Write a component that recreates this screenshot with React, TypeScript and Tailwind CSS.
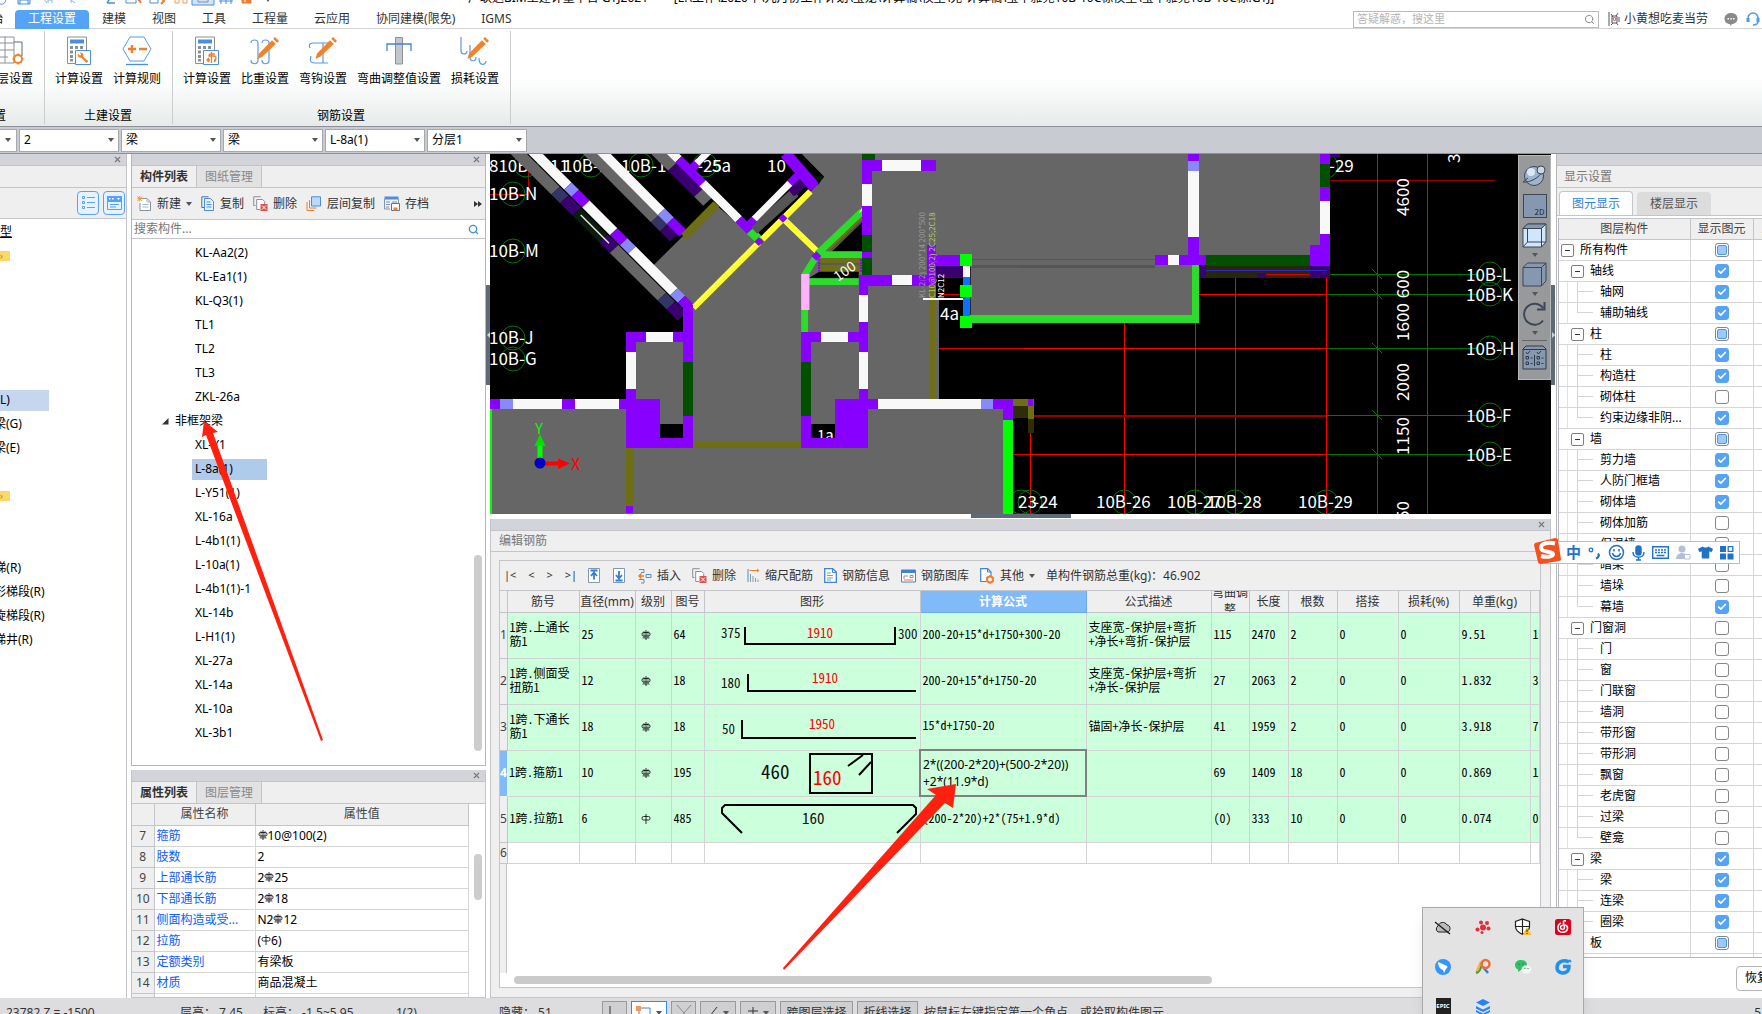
import type { ReactNode } from "react"
import { Check, Search, X } from "lucide-react"
import { FaTshirt } from "react-icons/fa"

type CheckState = "on" | "off" | "mixed"

const PURPLE = "#8800ff"
const DARK_PURPLE = "#3a0070"
const LILAC = "#8888ff"
const WHITE = "#f8f8f8"
const GREY = "#666666"
const FOREST = "#005000"
const GREEN = "#2bdc2b"
const OLIVE = "#6e6e14"
const YELLOW = "#ffff33"
const GRID = "#007800"

/* ---------- shared bits ---------- */

function PanelStrip({ closable = true }: { closable?: boolean }) {
  return (
    <div className="flex h-3 shrink-0 items-center justify-end border-b border-[#c3c5cb] bg-[#d2d4da] pr-1">
      {closable && (
        <button type="button" aria-label="关闭" className="text-[#777]">
          <X size={9} strokeWidth={3} />
        </button>
      )}
    </div>
  )
}

function Caret() {
  return <span className="inline-block border-x-[3px] border-t-4 border-x-transparent border-t-[#555]" />
}

function PanelTabs({ tabs }: { tabs: string[] }) {
  return (
    <div className="flex h-[22px] shrink-0 border-b border-[#c3c5cb] bg-[#efefef]" role="tablist">
      {tabs.map((tab, i) => (
        <button
          key={tab}
          type="button"
          role="tab"
          aria-selected={i === 0}
          className={
            i === 0
              ? "border-r border-[#c3c5cb] px-2 font-bold text-[#333]"
              : "border-r border-[#c3c5cb] bg-[#e2e2e2] px-2 text-[#888]"
          }
        >
          {tab}
        </button>
      ))}
    </div>
  )
}

function ToolButton({ icon, label, caret }: { icon: ReactNode; label: string; caret?: boolean }) {
  return (
    <button type="button" className="flex shrink-0 items-center gap-[5px] whitespace-nowrap text-[#333]">
      {icon}
      {label}
      {caret && <Caret />}
    </button>
  )
}

/* HRB400 / HPB300 bar marks */
function BarMark({ grade = 3 }: { grade?: number }) {
  return (
    <svg width="10" height="10" viewBox="0 0 10 10" className="inline-block align-baseline" fill="none" stroke="#000" strokeWidth="0.800">
      <rect x="1" y="2.500" width="8" height="3.500" rx="1.500" />
      <path d="M5 0v10" />
      {grade === 3 && <path d="M3 1v7M7 1v7M1.500 8h7" strokeWidth="0.600" />}
    </svg>
  )
}

/* ---------- icons ---------- */

function NewIcon() {
  return (
    <svg width="15" height="15" viewBox="0 0 15 15" fill="none">
      <path d="M4 2.500h6l3.500 3.500v8.500H3V7" fill="#fff" stroke="#8a9299" />
      <path d="M10 2.500V6h3.500M5.500 8.500h6M5.500 11h6" stroke="#aab4bc" />
      <path d="M.5.5l4.500 4.500M5 .5L.5 5M2.700 0v5.500M0 2.700h5.500" stroke="#f59a2c" />
    </svg>
  )
}

function CopyIcon() {
  return (
    <svg width="14" height="15" viewBox="0 0 14 15" fill="none" stroke="#4a8fdc">
      <path d="M3 11.500H.8V.8h6.700" stroke="#3f73a8" />
      <path d="M3.500 2.500h6l3 3v9h-9z" fill="#e8f2fd" />
      <path d="M5.500 6h4M5.500 8.500h5M5.500 11h5" />
    </svg>
  )
}

function DeleteIcon() {
  return (
    <svg width="15" height="15" viewBox="0 0 15 15" fill="none" stroke="#8a9299">
      <path d="M2.500 9.500H.7V.7h7" />
      <path d="M7 13.500H3.700V3.500h6l2 2V8" fill="#fff" />
      <path d="M7.500 8h7v7h-7z" fill="#d9534f" stroke="none" />
      <path d="M9 9.500l4 4M13 9.500l-4 4" stroke="#fff" />
    </svg>
  )
}

function LayerCopyIcon() {
  return (
    <svg width="16" height="15" viewBox="0 0 16 15" fill="none">
      <path d="M1 6v8.500h7M3.500 4v8h7" stroke="#ef7f2e" />
      <path d="M5.500.8h9v9.200h-9z" fill="#b9d8fa" stroke="#4a8fdc" />
    </svg>
  )
}

function ArchiveIcon() {
  return (
    <svg width="16" height="15" viewBox="0 0 16 15" fill="none">
      <path d="M.5.5h14v3H.5z" fill="#4a8fdc" />
      <path d="M.5 3v10H6M14.500 3v4M2 6h4M2 8.500h4M2 11h3M8 6h5" stroke="#7f97b0" />
      <path d="M7.500 7.500h8v7h-8z" fill="#fff" stroke="#4a78b0" />
      <path d="M9.500 11.500h4v3h-4z" fill="#ef7f2e" />
    </svg>
  )
}

function MoveIcon({ down }: { down?: boolean }) {
  return (
    <svg width="12" height="15" viewBox="0 0 12 15" fill="none">
      <path d="M.5.5h11v14H.5z" fill="#fff" stroke="#7f97b0" />
      <path
        d={down ? "M6 3v7M3 7l3 3.500L9 7M2.500 12.500h7" : "M6 11.500V5M3 8l3-3.500L9 8M2.500 2.500h7"}
        stroke="#2f7fd6"
        strokeWidth="1.800"
      />
    </svg>
  )
}

function InsertIcon() {
  return (
    <svg width="14" height="16" viewBox="0 0 14 16" fill="none">
      <path d="M1 1.500h5v3H3M3 15h3v-3.500H1" stroke="#7b858e" />
      <path d="M6 8H1.500M3.500 5.500L1 8l2.500 2.500" stroke="#ef7f2e" strokeWidth="1.500" />
      <path d="M8 6.500h5v3H8z" stroke="#4a8fdc" />
    </svg>
  )
}

function ScaleIcon() {
  return (
    <svg width="13" height="15" viewBox="0 0 13 15" fill="none">
      <path d="M3.500 6v8M6 8v6M8.500 10v4M11 11.500V14" stroke="#8a9bb0" />
      <path d="M2.500 2.500h9M10 1l2 1.500L10 4" stroke="#ef7f2e" />
      <path d="M1 14V1" stroke="#4a8fdc" />
    </svg>
  )
}

function InfoIcon() {
  return (
    <svg width="13" height="15" viewBox="0 0 13 15" fill="none" stroke="#3f84d6">
      <path d="M.7.700h8L12.300 4v10.300H.7z" fill="#fff" strokeWidth="1.300" />
      <path d="M8.500 1v3.500H12" />
      <path d="M3 5h4M3 7.500h6M3 10h6M3 12h4" stroke="#7b9cc0" />
    </svg>
  )
}

function LibraryIcon() {
  return (
    <svg width="15" height="14" viewBox="0 0 15 14" fill="none">
      <path d="M.5 1h14v12H.5z" fill="#fff" stroke="#3f84d6" />
      <path d="M.5 1h14v3H.5z" fill="#3f84d6" />
      <path d="M3 10V7h4M9 6.500h3v2H9z" stroke="#8a9299" />
      <path d="M3 11h9" stroke="#ef7f2e" />
    </svg>
  )
}

function OtherIcon() {
  return (
    <svg width="15" height="16" viewBox="0 0 15 16" fill="none">
      <path d="M6 13.500H.7V.7h7L11 4v4" fill="#fff" stroke="#3f84d6" strokeWidth="1.200" />
      <path d="M7.500.7V4H11" stroke="#3f84d6" />
      <circle cx="10" cy="11.500" r="3" stroke="#ef7f2e" strokeWidth="2" />
      <path d="M10 7v9M5.800 9.500l8.400 4M14.200 9.500l-8.400 4" stroke="#ef7f2e" strokeDasharray="1.500 6" />
    </svg>
  )
}

function CalcIcon({ mark }: { mark: "wrench" | "bar" }) {
  return (
    <svg width="28" height="30" viewBox="0 0 28 30" fill="none">
      <path d="M2.500 1h19v26.500h-19z" fill="#fff" stroke="#8a9299" />
      <path d="M5 3.500h14v4H5z" fill="#4a8fdc" />
      <path d="M5 10h3v3H5zM10 10h3v3h-3zM15 10h3v3h-3zM5 14.500h3v3H5zM5 19h3v3H5zM5 23h3v2.500H5z" fill="#8a9299" />
      <path d="M10.500 14.500h15v14h-15z" fill="#fff" stroke="#4a8fdc" />
      {mark === "wrench" ? (
        <path d="M13 17.500a3 3 0 003.500 4.200l5 5.300 1.800-1.800-5-4.500a3.200 3.200 0 00-3.600-4.200l1.500 2-1.200 1.300z" fill="#ef7f2e" />
      ) : (
        <path d="M18.500 16v11M22 18h-4a2 2 0 00-2 2h5a2 2 0 010 4M14 24h3M16 22l-2 2 2 2M21 26l2-2" stroke="#ef7f2e" strokeWidth="1.300" />
      )}
    </svg>
  )
}

function RulesIcon() {
  return (
    <svg width="30" height="30" viewBox="0 0 30 30" fill="none">
      <path d="M8 1h14l7 12-7 12H8L1 13z" fill="#fff" stroke="#5a9be6" />
      <path d="M6 13h8M10 9v8M17 13h8" stroke="#ef7f2e" strokeWidth="2.400" />
      <path d="M4 28.500h22" stroke="#4a8fdc" strokeWidth="1.300" />
    </svg>
  )
}

function PencilIcon({ kind }: { kind: "weight" | "hook" | "loss" }) {
  const paths = {
    weight: "M1 7c0-4 7-4 7 0v17c0 5-7 5-7 0M12 7c0-4 7-4 7 0v17c0 5-7 5-7 0",
    hook: "M2 12C0 8 3 7 6 7h14M3 20c-2 7 1 7 5 7h12M15 7v20M11 27h9",
    loss: "M1 1v14c0 4 6 4 6 0M10 9v12c0 5 6 5 6 0M19 22c0 9 7 7 7 3",
  }
  return (
    <svg width="30" height="30" viewBox="0 0 30 30" fill="none">
      <path d={paths[kind]} stroke="#5a9be6" strokeWidth="1.200" />
      <path d="M25 1l4 4-1.800 1.800-4-4z" fill="#ef7f2e" />
      <path d="M22 4.200l3.800 3.800L12.500 20.500l-5 2.500 1.500-5.500z" fill="#f0822c" />
    </svg>
  )
}

function BendIcon() {
  return (
    <svg width="26" height="30" viewBox="0 0 26 30" fill="none">
      <path d="M9.500 1.500h7V28h-7z" fill="#c3c7cc" stroke="#8a9299" />
      <path d="M1 15V8h24v7" stroke="#3f84d6" strokeWidth="1.300" />
    </svg>
  )
}

function FloorIcon() {
  return (
    <svg width="30" height="30" viewBox="0 0 30 30" fill="none">
      <path d="M2 1h18v26H2M2 7h18M2 14h18M2 21h12M11 1v26" stroke="#8a9299" />
      <path d="M20 6h8v14" stroke="#5a6a7a" />
      <circle cx="24" cy="23" r="4" stroke="#f0822c" strokeWidth="2" />
      <path d="M24 17v12M18 23h12M20 19l8 8M28 19l-8 8" stroke="#f0822c" strokeDasharray="2 8" />
    </svg>
  )
}

/* ---------- top area ---------- */

function TitleBar() {
  return (
    <header className="flex h-[10px] items-end overflow-hidden bg-white">
      <div className="flex h-6 w-[468px] shrink-0 items-center">
        <svg width="280" height="24" viewBox="0 0 280 24" fill="none" stroke="#4a8fdc">
          <path d="M0 18c4 1 6-2 6-6" />
          <path d="M18 4v14h12V4M20 18v-4h8v4" fill="#cfe3fa" />
          <path d="M43 12l4 5M48 17v-3h4v3M75 17l-4-3v3" stroke="#8fb4de" />
          <path d="M107 17h8M107 17l4-6" strokeWidth="1.500" />
          <path d="M126 8h10v9h-10zM126 12h10" />
          <path d="M150 8h8v9h-8zM134 10l7 7" />
          <path d="M137 11l4 6M161 12l3 3-3 3" stroke="#ef7f2e" strokeWidth="2" />
          <path d="M175 10v7h4v-7M183 10v7h4v-7" stroke="#ef9a5a" />
          <path d="M192 4h22v15h-22z" fill="#cfe3fa" />
          <path d="M198 13h10v3h-10z" stroke="#8a9299" />
          <path d="M219 8h14M219 15h14M221 5v13M226 5v13M231 5v13" />
          <path d="M242 8h9v9h-9z" stroke="#ef7f2e" fill="#ef7f2e" />
          <path d="M245 10v6M243 13h6" stroke="#fff" />
          <path d="M266 13l2 3 2-3z" fill="#555" stroke="none" />
        </svg>
      </div>
      <h1 className="h-6 whitespace-pre text-xs leading-6 text-black">
        {"广联达BIM土建计量平台 GTJ2021  -     [E:\\工作\\2020年\\九月份工作计划\\宝龙\\计算稿\\模型\\宛-计算稿\\宝华雅苑10B-10C栋模型\\宝华雅苑10B-10C栋.GTJ]"}
      </h1>
    </header>
  )
}

const MENU = ["工程设置", "建模", "视图", "工具", "工程量", "云应用", "协同建模(限免)", "IGMS"]

function MenuBar() {
  return (
    <nav className="flex h-[19px] items-center border-b border-[#d5d5d5] bg-white">
      <span className="flex w-[15px] justify-end overflow-hidden pr-3">始</span>
      {MENU.map((item, i) => (
        <button
          key={item}
          type="button"
          className={
            i === 0
              ? "h-[19px] shrink-0 rounded-t-sm bg-[#55a3f7] px-[13px] text-white"
              : "h-[19px] shrink-0 px-[13px] text-[#333]"
          }
        >
          {item}
        </button>
      ))}
      <div className="flex-1" />
      <label className="flex h-[17px] w-[246px] items-center border border-[#bbb] px-[3px]">
        <input aria-label="搜索" placeholder="答疑解惑，搜这里" className="w-full min-w-0 text-[11px] outline-none placeholder:text-[#b5b5b5]" />
        <Search size={11} className="shrink-0 text-[#888]" />
      </label>
      <div className="flex w-[163px] shrink-0 items-center gap-1 pl-[9px]">
        <svg width="12" height="14" viewBox="0 0 12 14" fill="none" stroke="#556">
          <path d="M1 0v14M3 2l2 3M10 1L8 4M4 4h5v7H4zM3 13l2-2M10 13l-1.500-2M11 5v5" />
          <circle cx="6.500" cy="7" r="1.500" stroke="#c44" />
        </svg>
        <span className="w-[96px] whitespace-nowrap text-[#333]">小黄想吃麦当劳</span>
        <svg width="14" height="14" viewBox="0 0 14 14">
          <path d="M7 1c4 0 6.500 2.300 6.500 5.500S11 12 8 12l-1.500 2L6 12C2.500 12 .5 9.500.5 6.500S3 1 7 1z" fill="#8a8a8a" />
          <path d="M3.500 6h1.500v1.500H3.500zM6.300 6h1.500v1.500H6.300zM9 6h1.500v1.500H9z" fill="#fff" />
        </svg>
        <svg width="14" height="14" viewBox="0 0 14 14" fill="none" stroke="#4a9af5" className="ml-1 shrink-0">
          <path d="M2 9V6a5 5 0 0110 0v3c0 3-2 4-5 4" strokeWidth="1.500" />
          <path d="M2 6v4M12 6v4" strokeWidth="3" />
        </svg>
      </div>
    </nav>
  )
}

function RibbonGroup({ title, children, clipped }: { title: string; children: ReactNode; clipped?: boolean }) {
  return (
    <section className="flex shrink-0 flex-col">
      <div className="flex">{children}</div>
      <h2 className={clipped ? "mt-auto -ml-[22px] text-left leading-4" : "mt-auto text-center leading-4"}>{title}</h2>
    </section>
  )
}

function RibbonButton({ icon, label }: { icon: ReactNode; label: string }) {
  return (
    <button type="button" className="flex shrink-0 flex-col items-center gap-[3px] whitespace-nowrap px-[5px] pt-[5px] leading-5">
      {icon}
      {label}
    </button>
  )
}

function Ribbon() {
  return (
    <div className="flex h-[97px] overflow-hidden bg-linear-to-b from-white from-50% to-[#e6ebea] py-[2px] text-black">
      <div className="flex w-[45px] shrink-0 justify-end overflow-hidden border-r border-[#ccc] pr-[6px]">
        <RibbonGroup title="基本设置" clipped>
          <RibbonButton icon={<FloorIcon />} label="楼层设置" />
        </RibbonGroup>
      </div>
      <div className="flex border-r border-[#ccc] pr-1.5 pl-[5px]">
        <RibbonGroup title="土建设置">
          <RibbonButton icon={<CalcIcon mark="wrench" />} label="计算设置" />
          <RibbonButton icon={<RulesIcon />} label="计算规则" />
        </RibbonGroup>
      </div>
      <div className="flex border-r border-[#ccc] pr-1.5 pl-[5px]">
        <RibbonGroup title="钢筋设置">
          <RibbonButton icon={<CalcIcon mark="bar" />} label="计算设置" />
          <RibbonButton icon={<PencilIcon kind="weight" />} label="比重设置" />
          <RibbonButton icon={<PencilIcon kind="hook" />} label="弯钩设置" />
          <RibbonButton icon={<BendIcon />} label="弯曲调整值设置" />
          <RibbonButton icon={<PencilIcon kind="loss" />} label="损耗设置" />
        </RibbonGroup>
      </div>
    </div>
  )
}

const SELECTS = [
  { label: "楼层", value: "2" },
  { label: "类别", value: "梁" },
  { label: "构件类型", value: "梁" },
  { label: "构件", value: "L-8a(1)" },
  { label: "分层", value: "分层1" },
]

function SelectorBar() {
  return (
    <div className="flex h-7 items-center gap-[2px] border-y border-[#8e9298] bg-[#c8cbd1]">
      <div className="flex h-[23px] w-[17px] items-center justify-center border border-l-0 border-[#a6a8ac] bg-white">
        <Caret />
      </div>
      {SELECTS.map(({ label, value }) => (
        <div key={label} className="relative h-[23px] w-[100px]">
          <select aria-label={label} className="h-full w-full appearance-none rounded-none border border-[#a6a8ac] bg-white px-1 text-black">
            <option>{value}</option>
          </select>
          <span className="pointer-events-none absolute inset-y-0 right-[5px] flex items-center">
            <Caret />
          </span>
        </div>
      ))}
    </div>
  )
}

/* ---------- left side ---------- */

const MODULES = ["型", "*", "", "", "", "", "", "L)", "梁(G)", "梁(E)", "", "*", "", "", "楼梯(R)", "形梯段(R)", "旋梯段(R)", "梯井(R)"]

function ModulePanel() {
  return (
    <aside className="flex w-[127px] shrink-0 flex-col overflow-hidden border-r border-[#c3c5cb] bg-white">
      <PanelStrip />
      <div className="h-[22px] shrink-0 border-b border-[#c3c5cb] bg-[#efefef]" />
      <div className="flex h-[31px] shrink-0 items-center justify-end gap-1 border-b border-[#c3c5cb] bg-[#efefef] pr-px">
        <button type="button" aria-label="列表" className="grid h-6 w-[22px] place-items-center rounded-sm border border-[#55a3f7] bg-[#e6f2fe]">
          <svg width="13" height="14" viewBox="0 0 13 14" fill="none" stroke="#55a3f7">
            <path d="M.5.5h2v2h-2zM.5 5.500h2v2h-2zM.5 10.500h2v2h-2zM5 1.500h8M5 6.500h8M5 11.500h8" />
          </svg>
        </button>
        <button type="button" aria-label="面板" className="grid h-6 w-[22px] place-items-center rounded-sm border border-[#55a3f7] bg-[#e6f2fe]">
          <svg width="15" height="14" viewBox="0 0 15 14" fill="none">
            <path d="M0 0h15v6H0z" fill="#55a3f7" />
            <path d="M.5 6v7.500h14V6M3 8.500h9M3 11h6" stroke="#55a3f7" />
            <path d="M2 2h1.500v1.500H2zM5 2h1.500v1.500H5zM10 2h3l-1.500 2z" fill="#fff" />
          </svg>
        </button>
      </div>
      <ul className="pt-px">
        {MODULES.map((name, i) => (
          <li key={i} className="flex h-6 items-center">
            {name === "*" && (
              <span className="h-[10px] w-[10px] overflow-hidden bg-[#ffd766] text-[9px] leading-[9px] text-[#a67c00]">›</span>
            )}
            {name !== "*" && (
              <span
                className={
                  name === "L)"
                    ? "flex h-[21px] w-[49px] items-center bg-[#c5d6ee]"
                    : name === "型"
                      ? "underline"
                      : name === "楼梯(R)"
                        ? "flex w-[21px] justify-end overflow-hidden whitespace-nowrap"
                        : name.includes("梯")
                          ? "-ml-[6px] whitespace-nowrap"
                          : name.startsWith("梁")
                            ? "-ml-[6px]"
                            : ""
                }
              >
                {name}
              </span>
            )}
          </li>
        ))}
      </ul>
    </aside>
  )
}

const FRAME_BEAMS = ["KL-Aa2(2)", "KL-Ea1(1)", "KL-Q3(1)", "TL1", "TL2", "TL3", "ZKL-26a"]
const PLAIN_BEAMS = [
  "XL-Y1", "L-8a(1)", "L-Y51(1)", "XL-16a", "L-4b1(1)", "L-10a(1)", "L-4b1(1)-1",
  "XL-14b", "L-H1(1)", "XL-27a", "XL-14a", "XL-10a", "XL-3b1",
]

function BeamItem({ name }: { name: string }) {
  const selected = name === "L-8a(1)"
  return (
    <li className="flex h-6 items-center pl-[60px]">
      <span className={selected ? "flex h-[21px] w-[75px] items-center bg-[#b0caec] pl-[3px]" : "pl-[3px]"}>{name}</span>
    </li>
  )
}

function ComponentPanel() {
  return (
    <section className="relative flex min-h-0 flex-1 flex-col overflow-hidden border border-t-0 border-[#b5b7bc] bg-white">
      <PanelStrip />
      <PanelTabs tabs={["构件列表", "图纸管理"]} />
      <div className="flex h-8 shrink-0 items-center gap-[9px] border-b border-[#c3c5cb] bg-[#efefef] pl-[5px]">
        <ToolButton icon={<NewIcon />} label="新建" caret />
        <ToolButton icon={<CopyIcon />} label="复制" />
        <ToolButton icon={<DeleteIcon />} label="删除" />
        <ToolButton icon={<LayerCopyIcon />} label="层间复制" />
        <ToolButton icon={<ArchiveIcon />} label="存档" />
        <button type="button" aria-label="更多" className="mr-[3px] ml-auto">
          <svg width="8" height="8" viewBox="0 0 8 8" fill="#333">
            <path d="M0 1l4 3-4 3zM4 1l4 3-4 3z" />
          </svg>
        </button>
      </div>
      <label className="flex h-[19px] shrink-0 items-center border-b border-[#c3c5cb] px-[2px]">
        <input aria-label="搜索构件" placeholder="搜索构件..." className="min-w-0 flex-1 outline-none placeholder:text-[#777]" />
        <Search size={11} strokeWidth={3} className="mr-1 text-[#3e93cf]" />
      </label>
      <ul className="min-h-0 flex-1 overflow-hidden pt-[2px] text-black">
        {FRAME_BEAMS.map((name) => (
          <BeamItem key={name} name={name} />
        ))}
        <li className="flex h-6 items-center gap-1.5 pl-[30px]">
          <svg width="7" height="7" viewBox="0 0 7 7" fill="#333">
            <path d="M6.500 0v6.500H0z" />
          </svg>
          非框架梁
        </li>
        {PLAIN_BEAMS.map((name) => (
          <BeamItem key={name} name={name} />
        ))}
      </ul>
      <div className="absolute right-[3px] bottom-[14px] h-[196px] w-2 rounded-full bg-[#cdcdcd]" />
    </section>
  )
}

const PROPERTIES: { no: number; name: string; value: ReactNode }[] = [
  { no: 7, name: "箍筋", value: <><BarMark />10@100(2)</> },
  { no: 8, name: "肢数", value: "2" },
  { no: 9, name: "上部通长筋", value: <>2<BarMark />25</> },
  { no: 10, name: "下部通长筋", value: <>2<BarMark />18</> },
  { no: 11, name: "侧面构造或受...", value: <>N2<BarMark />12</> },
  { no: 12, name: "拉筋", value: <>(<BarMark grade={1} />6)</> },
  { no: 13, name: "定额类别", value: "有梁板" },
  { no: 14, name: "材质", value: "商品混凝土" },
  { no: 15, name: "混凝土类型", value: "" },
]

function PropertyPanel() {
  return (
    <section className="relative flex h-[228px] shrink-0 flex-col overflow-hidden border border-t-0 border-[#c3c5cb] bg-white">
      <PanelStrip />
      <PanelTabs tabs={["属性列表", "图层管理"]} />
      <div className="min-h-0 flex-1 overflow-hidden pr-4">
        <table className="w-full table-fixed border-collapse leading-4">
          <colgroup>
            <col className="w-[22px]" />
            <col className="w-[101px]" />
            <col />
          </colgroup>
          <thead>
            <tr className="h-[21px] bg-[#efefef] text-[#444]">
              <th className="border-r border-b border-[#c3c5cb]" />
              <th className="border-r border-b border-[#c3c5cb] p-0 font-normal">属性名称</th>
              <th className="border-r border-b border-[#c3c5cb] p-0 font-normal">属性值</th>
            </tr>
          </thead>
          <tbody>
            {PROPERTIES.map(({ no, name, value }) => (
              <tr key={no} className="h-[21px]">
                <td className="border-r border-b border-[#c3c5cb] bg-[#efefef] p-0 text-center text-[#444]">{no}</td>
                <td className="border-r border-b border-[#d6d6d6] p-0 pl-[2px] whitespace-nowrap text-[#0f5cff]">{name}</td>
                <td className="border-r border-b border-[#d6d6d6] p-0 pl-[2px] whitespace-nowrap text-black">{value}</td>
              </tr>
            ))}
          </tbody>
        </table>
      </div>
      <div className="absolute top-[84px] right-[3px] h-[46px] w-2 rounded-full bg-[#cdcdcd]" />
    </section>
  )
}

function SideHandle({ flip }: { flip?: boolean }) {
  return (
    <div className={flip ? "w-[5px] shrink-0 pt-[131px]" : "w-1 shrink-0 pt-[131px]"}>
      <button type="button" aria-label="折叠" className="grid h-[100px] w-1 place-items-center bg-[#5f6a77]">
        <svg width="3" height="6" viewBox="0 0 3 6" fill="#cfd3d8">
          <path d={flip ? "M0 0l3 3-3 3z" : "M3 0L0 3l3 3z"} />
        </svg>
      </button>
    </div>
  )
}

/* ---------- model view ---------- */

type Box = [x1: number, y1: number, x2: number, y2: number, fill: string]

function Boxes({ items }: { items: Box[] }) {
  return items.map(([x1, y1, x2, y2, fill], i) => (
    <rect key={i} x={x1} y={y1} width={x2 - x1} height={y2 - y1} fill={fill} shapeRendering="crispEdges" />
  ))
}

type Stop = [y1: number, y2: number, color: string]

/* A sloped wall through (x, y), split into coloured bands by height */
function SlopedWall({ x, y, slope, width, stops }: { x: number; y: number; slope: number; width: number; stops: Stop[] }) {
  return stops.map(([y1, y2, color], i) => (
    <line key={i} x1={x + (y1 - y) / slope} y1={y1} x2={x + (y2 - y) / slope} y2={y2} stroke={color} strokeWidth={width} />
  ))
}

const WALLS_WEST: Box[] = [
  [508, 822, 575, 865, "#000"],
  [948, 822, 1015, 865, "#000"],
  [1310, 383, 1390, 748, "#000"],
  [1318, 518, 1568, 748, "#000"],
  [1533, 748, 1568, 1000, "#000"],
  [410, 547, 604, 577, PURPLE],
  [467, 547, 546, 577, WHITE],
  [575, 465, 604, 637, PURPLE],
  [575, 637, 604, 798, FOREST],
  [575, 798, 604, 895, PURPLE],
  [410, 577, 438, 606, PURPLE],
  [410, 606, 438, 718, WHITE],
  [410, 718, 438, 748, PURPLE],
  [410, 748, 508, 895, PURPLE],
  [508, 865, 604, 895, PURPLE],
  [15, 748, 410, 778, PURPLE],
  [45, 748, 80, 778, LILAC],
  [80, 748, 223, 778, WHITE],
  [262, 748, 390, 778, WHITE],
  [15, 778, 19, 1092, "#00ff00"],
  [605, 874, 918, 894, OLIVE],
  [410, 895, 430, 1068, OLIVE],
  [410, 1068, 430, 1090, PURPLE],
  [918, 547, 1113, 577, PURPLE],
  [977, 547, 1054, 577, WHITE],
  [918, 577, 948, 637, PURPLE],
  [918, 637, 948, 798, FOREST],
  [918, 798, 948, 895, PURPLE],
  [1015, 748, 1113, 895, PURPLE],
  [1095, 12, 1132, 30, FOREST],
  [1095, 30, 1310, 62, PURPLE],
  [1153, 30, 1265, 62, WHITE],
  [1095, 62, 1123, 102, PURPLE],
  [1095, 102, 1123, 168, WHITE],
  [1095, 168, 1123, 255, PURPLE],
  [1095, 255, 1123, 375, FOREST],
  [1095, 305, 1123, 325, PURPLE],
  [1085, 375, 1310, 408, PURPLE],
  [1182, 375, 1240, 405, WHITE],
  [1085, 408, 1113, 748, PURPLE],
  [1085, 435, 1113, 516, WHITE],
  [1085, 606, 1113, 718, WHITE],
  [1290, 408, 1308, 748, OLIVE],
  [1308, 445, 1318, 748, GREY],
  [1282, 285, 1310, 408, PURPLE],
  [1310, 315, 1385, 347, PURPLE],
  [1310, 347, 1387, 383, DARK_PURPLE],
  [1272, 444, 1387, 451, WHITE],
  [1318, 432, 1380, 435, "#dd0000"],
  [1387, 345, 1407, 380, WHITE],
  [1387, 380, 1407, 500, "#0f6fff"],
  [1407, 495, 1568, 518, GREEN],
  [1380, 312, 1415, 348, "#00ff00"],
  [1380, 405, 1415, 440, "#00ff00"],
  [1380, 499, 1415, 535, "#00ff00"],
  [1415, 327, 1568, 330, "#555"],
  [1415, 345, 1568, 353, "#575757"],
  [1113, 748, 1533, 778, PURPLE],
  [1142, 748, 1440, 778, WHITE],
  [1440, 748, 1475, 778, LILAC],
  [1505, 778, 1533, 810, PURPLE],
  [1505, 810, 1533, 1092, "#00ff00"],
  [1533, 748, 1568, 768, OLIVE],
  [1533, 768, 1568, 805, "#2d2d0a"],
  [1318, 594, 1568, 597, "#dd0000"],
  [1533, 912, 1568, 915, "#dd0000"],
]

const WALLS_EAST: Box[] = [
  [0, 12, 870, 315, GREY],
  [0, 315, 500, 495, GREY],
  [0, 327, 391, 330, "#555"],
  [0, 345, 391, 353, "#555"],
  [0, 495, 520, 518, GREEN],
  [499, 345, 520, 518, GREEN],
  [488, 12, 520, 345, PURPLE],
  [488, 32, 520, 62, LILAC],
  [488, 62, 520, 262, WHITE],
  [391, 315, 540, 345, PURPLE],
  [430, 315, 461, 345, WHITE],
  [540, 315, 842, 347, FOREST],
  [520, 347, 842, 383, "#2a260a"],
  [520, 347, 540, 383, DARK_PURPLE],
  [688, 370, 714, 383, DARK_PURPLE],
  [714, 372, 842, 375, "#dd0000"],
  [871, 12, 900, 285, PURPLE],
  [871, 42, 900, 111, FOREST],
  [871, 153, 900, 253, WHITE],
  [842, 285, 900, 347, PURPLE],
  [842, 347, 900, 383, DARK_PURPLE],
  [540, 360, 890, 363, "#2b2bd0"],
  [900, 12, 930, 20, DARK_PURPLE],
  [0, 748, 24, 768, OLIVE],
  [0, 768, 24, 805, "#2d2d0a"],
  [24, 748, 40, 808, OLIVE],
  [24, 748, 38, 768, PURPLE],
  [24, 808, 40, 848, "#2d2d0a"],
]

const ROW_AXES = [
  { y: 274, label: "10B-L" },
  { y: 294, label: "10B-K" },
  { y: 348, label: "10B-H" },
  { y: 415, label: "10B-F" },
  { y: 454, label: "10B-E" },
]
const COLUMN_AXES = [
  { x: 1124, label: "10B-26" },
  { x: 1195, label: "10B-27" },
  { x: 1235, label: "10B-28" },
  { x: 1326, label: "10B-29" },
]
const WEST_AXES = [
  { y: 194, label: "10B-N" },
  { y: 251, label: "10B-M" },
  { y: 338, label: "10B-J" },
  { y: 359, label: "10B-G" },
]
const DIMENSIONS = [
  { y: 197, label: "4600" },
  { y: 284, label: "600" },
  { y: 322, label: "1600" },
  { y: 382, label: "2000" },
  { y: 436, label: "1150" },
]
const TOP_LABELS = [
  { x: 489, label: "810B-" },
  { x: 550, label: "11" },
  { x: 563, label: "10B-1" },
  { x: 621, label: "10B-1" },
  { x: 697, label: "-25" },
  { x: 712, label: "5a" },
  { x: 767, label: "10" },
]

function ModelDrawing() {
  return (
    <svg className="h-full w-full" viewBox="490 154 1061 360" preserveAspectRatio="xMinYMin slice" aria-label="平面模型">
      <rect x="490" y="154" width="1061" height="360" fill="#000" />
      {/* axis lines */}
      <g stroke="#ff0000" shapeRendering="crispEdges">
        <path d="M1199 294.500H1326M1020 348.500H1326M1020 454.500H1326" />
        <path d="M1124.500 322V514M1195.500 322V514M1235.500 277V514M1326.500 277V514M1030.500 432V514" />
        <path d="M1033 416H1326" stroke="#990000" strokeWidth="2" />
        <path d="M1330 180.500H1495" stroke="#990000" />
        <path d="M490 194.500H529M528.500 170V194" stroke="#c00000" />
      </g>
      <g stroke={GRID}>
        <path d="M1377.500 154V514M1427.500 154V514" />
        {ROW_AXES.map(({ y }) => (
          <path key={y} d={`M1327 ${y + 0.5}H1478M1372 ${y - 5}l10 10`} />
        ))}
      </g>
      <g fill="none" stroke={GRID}>
        {ROW_AXES.map(({ y }) => <circle key={y} cx="1490" cy={y} r="12" />)}
        {COLUMN_AXES.map(({ x }) => <circle key={x} cx={x} cy="502" r="12" />)}
        {WEST_AXES.map(({ y }) => <circle key={y} cx="513" cy={y} r="12" />)}
        <circle cx="526" cy="165" r="12" />
        <circle cx="591" cy="165" r="12" />
        <circle cx="641" cy="165" r="12" />
        <circle cx="705" cy="165" r="12" />
        <circle cx="1326" cy="166" r="12" />
        <circle cx="1030" cy="502" r="12" />
        <circle cx="1021" cy="502" r="12" />
      </g>
      <g fill="#fff" fontSize="17">
        {ROW_AXES.map(({ y, label }) => <text key={label} x="1466" y={y + 7}>{label}</text>)}
        {COLUMN_AXES.map(({ x, label }) => <text key={label} x={x - 28} y="508">{label}</text>)}
        {WEST_AXES.map(({ y, label }) => <text key={label} x="489" y={y + 6}>{label}</text>)}
        {TOP_LABELS.map(({ x, label }) => <text key={x} x={x} y="172">{label}</text>)}
        <text x="1329" y="172">-29</text>
        <text x="1018" y="508">23</text>
        <text x="1033" y="508">-24</text>
        {DIMENSIONS.map(({ y, label }) => (
          <text key={label} textAnchor="middle" transform={`translate(1409 ${y}) rotate(-90)`}>{label}</text>
        ))}
        <text transform="translate(1409 520) rotate(-90)">50</text>
        <text transform="translate(1460 163) rotate(-90)">3</text>
      </g>

      {/* western part of the plan */}
      <g transform="translate(485 150) scale(0.3444 0.3333)">
        <path
          d="M490 345L575 258 665 160 755 240 795 275 945 125 985 80 920 12H1568V495H1410V350H1310V748H1530V1092H15V760H410V547H575L600 460z"
          fill={GREY}
        />
        <SlopedWall x={566} y={494} slope={1.03} width={34} stops={[
          [-10, 122, GREY], [122, 148, "#343466"], [148, 185, DARK_PURPLE], [185, 265, "#0c1c0c"], [265, 297, DARK_PURPLE],
          [297, 440, GREY], [440, 467, "#343466"], [467, 500, DARK_PURPLE],
        ]} />
        <path d="M278 195L360 280" stroke="#e8e8e8" strokeWidth="4" />
        <SlopedWall x={590} y={468} slope={1.03} width={30} stops={[
          [-10, 108, WHITE], [108, 130, LILAC], [130, 162, PURPLE], [162, 245, WHITE], [245, 275, PURPLE],
          [275, 300, LILAC], [300, 425, WHITE], [425, 448, LILAC], [448, 480, PURPLE],
        ]} />
        <SlopedWall x={545} y={258} slope={1.04} width={34} stops={[[-10, 205, GREY], [205, 232, "#343466"], [232, 262, DARK_PURPLE]]} />
        <SlopedWall x={565} y={240} slope={1.04} width={28} stops={[[-10, 185, WHITE], [185, 212, LILAC], [212, 250, PURPLE]]} />
        <path d="M578 260L672 162" stroke={OLIVE} strokeWidth="24" />
        <SlopedWall x={632} y={140} slope={1.03} width={36} stops={[[-10, 50, GREY], [50, 128, DARK_PURPLE], [128, 155, GREY]]} />
        <SlopedWall x={760} y={232} slope={1.03} width={26} stops={[[-10, 28, WHITE], [28, 100, PURPLE], [100, 208, WHITE], [208, 242, PURPLE], [242, 270, GREEN]]} />
        <path d="M595 62L620 35" stroke={PURPLE} strokeWidth="24" />
        <path d="M615 40L650 4" stroke={WHITE} strokeWidth="20" />
        <path d="M780 240L900 128" stroke="#555" strokeWidth="30" />
        <path d="M885 125L930 85" stroke={DARK_PURPLE} strokeWidth="38" />
        <path d="M755 235L785 205M880 105L915 68" stroke={PURPLE} strokeWidth="22" />
        <path d="M782 207L885 100" stroke={WHITE} strokeWidth="20" />
        <path d="M872 10L958 112" stroke={PURPLE} strokeWidth="34" />
        <path d="M962 78H985L968 104z" fill="#001800" />
        <path d="M605 474L795 278M805 268L945 124M868 208L965 305" stroke={YELLOW} strokeWidth="18" />
        <path d="M1095 210V305H1000z" fill="#000" />
        <path d="M1000 300L1095 205" stroke={OLIVE} strokeWidth="16" />
        <path d="M1005 300L1095 212" stroke="#3a3aa0" strokeWidth="3" />
        <path d="M970 325H1090V365H970z" fill={OLIVE} />
        <path d="M970 342H1090" stroke="#4444aa" strokeWidth="3" />
        <path d="M970 365H1085V385H940z" fill="#000" />
        <path d="M970 328V365M1092 328V365" stroke={PURPLE} strokeWidth="6" strokeDasharray="5 3" />
        <path d="M965 312L1095 184M975 314H1095M928 376L958 325M940 395H1085" stroke={GREEN} strokeWidth="20" />
        <path d="M1085 190L1095 172V182z" fill={YELLOW} />
        <path d="M918 372H942V480H918z" fill="#ffb3ff" />
        <path d="M918 480H938V547H918z" fill={GREEN} />
        <path d="M795 262l13 13-13 13-13-13zM865 192l13 13-13 13-13-13zM962 304l14 14-14 14-14-14z" fill={PURPLE} />
        <Boxes items={WALLS_WEST} />
      </g>

      {/* eastern part of the plan */}
      <g transform="translate(1020 150) scale(0.3444 0.3333)">
        <Boxes items={WALLS_EAST} />
      </g>

      <g fill="#fff">
        <text x="940" y="320" fontSize="17">4a</text>
        <text x="817" y="441" fontSize="15">1a</text>
        <text fontSize="14" transform="translate(838 282) rotate(-35)">100</text>
        <g fontSize="8">
          <text fill="#999" transform="translate(925 298) rotate(-90)">KL-2(2) 200*14 200*500</text>
          <text fill="#b5c96a" transform="translate(935 298) rotate(-90)">C10@100(2) 2C25;2C18</text>
          <text transform="translate(944 298) rotate(-90)">N2C12</text>
        </g>
      </g>
      <path d="M801 438h34v10h-34z" fill={PURPLE} />
      {/* coordinate gizmo */}
      <path d="M540 463V440" stroke="#00ff00" strokeWidth="5" />
      <path d="M534.500 446L540 434l5.500 12z" fill="#00e000" />
      <path d="M540 463.500H560" stroke="#ff0000" strokeWidth="4" />
      <path d="M558 458.500l12 5-12 5.500z" fill="#ff0000" />
      <circle cx="540" cy="463" r="5.500" fill="#0000c0" />
      <text x="535" y="434" fontSize="15" fill="#00ff00">Y</text>
      <text x="571" y="470" fontSize="16" fill="#ff0000">X</text>
    </svg>
  )
}

function ViewTools() {
  return (
    <div className="absolute top-px right-0 flex w-[33px] flex-col items-center border border-[#b5b8bb] bg-[#97999b] pt-[7px] pb-[9px]" role="toolbar">
      <button type="button" aria-label="动态观察" className="shrink-0">
        <svg width="25" height="25" viewBox="0 0 25 25" fill="none" stroke="#3c4654">
          <circle cx="12" cy="13" r="9.500" fill="#9fb4cb" />
          <circle cx="9" cy="9" r="4" fill="#dce8f4" stroke="none" />
          <path d="M1 19c6 1 17-4 20-12M1 19l5-4" />
          <circle cx="19" cy="7" r="4" fill="#c9d9e9" />
        </svg>
      </button>
      <button type="button" className="mt-1.5 flex h-6 w-6 shrink-0 items-end justify-end border border-[#3c4654] bg-[#8598b0] pr-px text-[8px] leading-[11px] text-[#20262e]">
        2D
      </button>
      <button type="button" aria-label="线框" className="mt-[5px] shrink-0">
        <svg width="25" height="25" viewBox="0 0 25 25" fill="#cfe6fd" stroke="#3c4654">
          <path d="M1 5.500L5.500 1H24v18l-4.500 5H1z" />
          <path d="M1 5.500L5.500 1H24l-4.500 4.500z" fill="#8598b0" />
          <path d="M1 5.500h18.500V24M19.500 5.500L24 1M5.500 5.500V19H19.500M5.500 19L1 24M19.500 19L24 19" fill="none" />
        </svg>
      </button>
      <span className="mt-[5px] flex"><Caret /></span>
      <button type="button" aria-label="实体" className="mt-[5px] shrink-0">
        <svg width="25" height="25" viewBox="0 0 25 25" fill="#8598b0" stroke="#3c4654">
          <path d="M1 5.500L5.500 1H24v18l-4.500 5H1z" />
          <path d="M1 5.500h18.500V24M19.500 5.500L24 1" fill="none" />
        </svg>
      </button>
      <span className="mt-[5px] flex"><Caret /></span>
      <button type="button" aria-label="旋转" className="mt-[5px] shrink-0">
        <svg width="25" height="25" viewBox="0 0 25 25" fill="none" stroke="#3c4654" strokeWidth="2">
          <path d="M21 19.500A10.500 10.500 0 1121 7M22.500 1v7.500H15" />
        </svg>
      </button>
      <span className="mt-[5px] flex"><Caret /></span>
      <button type="button" aria-label="显示设置" className="mt-[5px] shrink-0 border-t border-[#666] pt-1">
        <svg width="25" height="25" viewBox="0 0 25 25" fill="none" stroke="#303a46">
          <path d="M1 4l3-3h17l3 3v20H1z" fill="#8598b0" />
          <path d="M1 4.500h23M12.500 10v11M4 7l1.500 2L8 6M15 7l1.500 2L19 6" />
          <path d="M4 11.500h2.500V14H4zM4 17h2.500v2.500H4zM15 11.500h2.500V14H15zM15 17h2.500v2.500H15zM8.500 13h2M8.500 18.500h2M19.500 13h2M19.500 18.500h2" />
        </svg>
      </button>
    </div>
  )
}

/* ---------- rebar editor ---------- */

const HEADERS = ["", "筋号", "直径(mm)", "级别", "图号", "图形", "计算公式", "公式描述", "弯曲调整", "长度", "根数", "搭接", "损耗(%)", "单重(kg)", ""]

interface RebarRow {
  name: string
  diameter: string
  grade: number
  shapeNo: string
  shape: ReactNode
  formula: string
  note: string
  rest: string[]
}

function Shape({ children }: { children: ReactNode }) {
  return (
    <svg width="215" height="45" viewBox="0 0 215 45" fill="none" stroke="#000" strokeWidth="2" className="block">
      {children}
    </svg>
  )
}

function Dim({ x, y, children, red, size = 13 }: { x: number; y: number; children: string; red?: boolean; size?: number }) {
  return (
    <text x={x} y={y} fontSize={size} fill={red ? "#f00" : "#111"} stroke="none">
      {children}
    </text>
  )
}

const ROWS: RebarRow[] = [
  {
    name: "1跨.上通长筋1",
    diameter: "25",
    grade: 3,
    shapeNo: "64",
    shape: (
      <Shape>
        <path d="M40 14v17h150V14" />
        <Dim x={16} y={25}>375</Dim>
        <Dim x={102} y={25} red>1910</Dim>
        <Dim x={193} y={26}>300</Dim>
      </Shape>
    ),
    formula: "200-20+15*d+1750+300-20",
    note: "支座宽-保护层+弯折+净长+弯折-保护层",
    rest: ["115", "2470", "2", "0", "0", "9.51", "19.02"],
  },
  {
    name: "1跨.侧面受扭筋1",
    diameter: "12",
    grade: 3,
    shapeNo: "18",
    shape: (
      <Shape>
        <path d="M43 15v17h168" />
        <Dim x={16} y={29}>180</Dim>
        <Dim x={107} y={24} red>1910</Dim>
      </Shape>
    ),
    formula: "200-20+15*d+1750-20",
    note: "支座宽-保护层+弯折+净长-保护层",
    rest: ["27", "2063", "2", "0", "0", "1.832", "3.664"],
  },
  {
    name: "1跨.下通长筋1",
    diameter: "18",
    grade: 3,
    shapeNo: "18",
    shape: (
      <Shape>
        <path d="M37 15v18h174" />
        <Dim x={17} y={29}>50</Dim>
        <Dim x={104} y={24} red>1950</Dim>
      </Shape>
    ),
    formula: "15*d+1750-20",
    note: "锚固+净长-保护层",
    rest: ["41", "1959", "2", "0", "0", "3.918", "7.836"],
  },
  {
    name: "1跨.箍筋1",
    diameter: "10",
    grade: 3,
    shapeNo: "195",
    shape: (
      <Shape>
        <path d="M105 3h62v39h-62zM143 15l15-11M154 24l12-13" />
        <Dim x={56} y={28} size={19}>460</Dim>
        <Dim x={108} y={34} size={19} red>160</Dim>
      </Shape>
    ),
    formula: "2*((200-2*20)+(500-2*20))+2*(11.9*d)",
    note: "",
    rest: ["69", "1409", "18", "0", "0", "0.869", "15.642"],
  },
  {
    name: "1跨.拉筋1",
    diameter: "6",
    grade: 1,
    shapeNo: "485",
    shape: (
      <Shape>
        <path d="M37 36L17 16v-5l3-3h188l3 3v6l-19 19" />
        <Dim x={97} y={27} size={15}>160</Dim>
      </Shape>
    ),
    formula: "(200-2*20)+2*(75+1.9*d)",
    note: "",
    rest: ["(0)", "333", "10", "0", "0", "0.074", "0.74"],
  },
]

const CELL = "border-r border-b border-[#d3d3d3] p-0 pb-[3px] pl-[2px] overflow-hidden"

function RebarTable() {
  return (
    <table className="w-full table-fixed border-collapse text-black">
      <colgroup>
        <col className="w-[7px]" />
        <col className="w-[72px]" />
        <col className="w-[56px]" />
        <col className="w-9" />
        <col className="w-[33px]" />
        <col className="w-[216px]" />
        <col className="w-[166px]" />
        <col className="w-[125px]" />
        <col className="w-[38px]" />
        <col className="w-[39px]" />
        <col className="w-[49px]" />
        <col className="w-[61px]" />
        <col className="w-[61px]" />
        <col className="w-[71px]" />
        <col />
      </colgroup>
      <thead>
        <tr className="h-[21px]">
          {HEADERS.map((h, i) => (
            <th
              key={i}
              className={
                h === "计算公式"
                  ? "border-r border-b border-[#6aa9ee] bg-[#80baf9] p-0 font-bold text-white"
                  : "overflow-hidden border-r border-b border-[#c3c5cb] bg-[#efefef] p-0 font-normal text-[#333]"
              }
            >
              <div className={h === "弯曲调整" ? "flex h-5 items-center justify-center leading-[17px]" : "h-5 leading-[22px] whitespace-nowrap"}>{h}</div>
            </th>
          ))}
        </tr>
      </thead>
      <tbody className="font-['Noto_Sans_Mono_CJK_SC','Noto_Sans_CJK_SC',monospace] leading-[14px]">
        {ROWS.map((row, i) => {
          const current = i === 3
          return (
            <tr key={row.name} className="h-[46px] bg-[#ccffdb]">
              <th
                className={
                  current
                    ? "bg-[#80baf9] p-0 font-['Noto_Sans',sans-serif] font-bold text-white"
                    : "border-r border-b border-[#c3c5cb] bg-[#efefef] p-0 font-['Noto_Sans',sans-serif] font-normal text-[#444]"
                }
              >
                <div className="flex w-[7px] justify-center">{i + 1}</div>
              </th>
              <td className={CELL}>{row.name}</td>
              <td className={CELL}>{row.diameter}</td>
              <td className="border-r border-b border-[#d3d3d3] p-0 pl-[5px]"><BarMark grade={row.grade} /></td>
              <td className={CELL}>{row.shapeNo}</td>
              <td className="border-r border-b border-[#d3d3d3] p-0">{row.shape}</td>
              <td
                className={
                  current
                    ? "border-2 border-[#808080] p-0 pr-3 pl-[2px] font-['Noto_Sans','Noto_Sans_CJK_SC',sans-serif] leading-[17px] break-all"
                    : CELL
                }
              >
                {row.formula}
              </td>
              <td className={CELL + " break-all"}>{row.note}</td>
              {row.rest.map((value, j) => (
                <td key={j} className={CELL}>{value}</td>
              ))}
            </tr>
          )
        })}
        <tr className="h-[21px] bg-white">
          <th className="border-r border-b border-[#c3c5cb] bg-[#efefef] p-0 font-['Noto_Sans',sans-serif] font-normal text-[#444]">
            <div className="flex w-[7px] justify-center">6</div>
          </th>
          {HEADERS.slice(1).map((_, i) => (
            <td key={i} className={CELL} />
          ))}
        </tr>
      </tbody>
    </table>
  )
}

function RebarEditor() {
  return (
    <section className="flex h-[479px] shrink-0 flex-col border border-t-0 border-[#c3c5cb] bg-[#efefef]">
      <PanelStrip />
      <h2 className="h-[21px] shrink-0 border-b border-[#c3c5cb] pl-2 leading-5 text-[#777]">编辑钢筋</h2>
      <div className="mt-2 mr-[9px] mb-[9px] ml-2 flex min-h-0 flex-1 flex-col overflow-hidden border border-[#c3c5cb] bg-white">
        <div className="flex h-[30px] shrink-0 items-center gap-[11px] border-b border-[#c3c5cb] bg-[#efefef] pl-1">
          <div className="flex w-[73px] justify-between text-[11px] text-[#333]">
            <button type="button" aria-label="第一条">|&lt;</button>
            <button type="button" aria-label="上一条">&lt;</button>
            <button type="button" aria-label="下一条">&gt;</button>
            <button type="button" aria-label="最后一条">&gt;|</button>
          </div>
          <button type="button" aria-label="上移"><MoveIcon /></button>
          <button type="button" aria-label="下移" className="mx-[2px]"><MoveIcon down /></button>
          <ToolButton icon={<InsertIcon />} label="插入" />
          <ToolButton icon={<DeleteIcon />} label="删除" />
          <ToolButton icon={<ScaleIcon />} label="缩尺配筋" />
          <ToolButton icon={<InfoIcon />} label="钢筋信息" />
          <ToolButton icon={<LibraryIcon />} label="钢筋图库" />
          <ToolButton icon={<OtherIcon />} label="其他" caret />
          <span className="whitespace-nowrap text-[#333]">单构件钢筋总重(kg)：46.902</span>
        </div>
        <div className="flex min-h-0 flex-1 flex-col">
          <RebarTable />
          <div className="w-[7px] flex-1 border-r border-[#c3c5cb] bg-[#efefef]" />
        </div>
        <div className="h-[14px] shrink-0 pt-[3px] pl-[14px]">
          <div className="h-2 w-[68%] rounded-full bg-[#cacaca]" />
        </div>
      </div>
    </section>
  )
}

/* ---------- display settings ---------- */

interface Layer {
  name: string
  level: 0 | 1 | 2
  state: CheckState
}

const group = (name: string, state: CheckState): Layer => ({ name, level: 1, state })
const leaf = (name: string, on = false): Layer => ({ name, level: 2, state: on ? "on" : "off" })

const LAYERS: Layer[] = [
  { name: "所有构件", level: 0, state: "mixed" },
  group("轴线", "on"),
  leaf("轴网", true),
  leaf("辅助轴线", true),
  group("柱", "mixed"),
  leaf("柱", true),
  leaf("构造柱", true),
  leaf("砌体柱"),
  leaf("约束边缘非阴...", true),
  group("墙", "mixed"),
  leaf("剪力墙", true),
  leaf("人防门框墙", true),
  leaf("砌体墙", true),
  leaf("砌体加筋"),
  leaf("保温墙"),
  leaf("暗梁"),
  leaf("墙垛"),
  leaf("幕墙", true),
  group("门窗洞", "off"),
  leaf("门"),
  leaf("窗"),
  leaf("门联窗"),
  leaf("墙洞"),
  leaf("带形窗"),
  leaf("带形洞"),
  leaf("飘窗"),
  leaf("老虎窗"),
  leaf("过梁"),
  leaf("壁龛"),
  group("梁", "on"),
  leaf("梁", true),
  leaf("连梁", true),
  leaf("圈梁", true),
  group("板", "mixed"),
  leaf("现浇板", true),
]

function LayerCheck({ label, state }: { label: string; state: CheckState }) {
  return (
    <span className="relative mx-auto grid size-[14px] place-items-center">
      <input
        type="checkbox"
        aria-label={label}
        defaultChecked={state === "on"}
        className="size-[14px] appearance-none rounded-[3px] border border-[#868686] bg-white checked:border-[#55a3f7] checked:bg-[#55a3f7]"
      />
      {state === "on" && <Check size={10} strokeWidth={4} className="pointer-events-none absolute text-white" />}
      {state === "mixed" && <span className="pointer-events-none absolute size-[10px] rounded-[2px] border border-[#4a98f0] bg-[#9ccaff]" />}
    </span>
  )
}

function LayerName({ layer, last }: { layer: Layer; last: boolean }) {
  if (layer.level === 2) {
    return (
      <div className="flex h-5 items-center pl-2">
        <span className="h-full w-[10px] border-l border-[#e2e2e2]" />
        <span className={last ? "h-full w-4" : "h-full w-4 border-l border-[#d5d5d5]"}>
          <span className={last ? "block h-[10px] border-b border-l border-[#d5d5d5]" : "block h-[10px] border-b border-[#d5d5d5]"} />
        </span>
        <span className="pl-[7px] whitespace-nowrap">{layer.name}</span>
      </div>
    )
  }
  return (
    <div className={layer.level === 0 ? "flex h-5 items-center gap-1.5 pl-[2px]" : "flex h-5 items-center gap-1.5 pl-3"}>
      <button type="button" aria-label="收起" className="grid size-[13px] place-items-center rounded-[2px] border border-[#808080] bg-white">
        <span className="h-px w-[5px] bg-[#333]" />
      </button>
      {layer.name}
    </div>
  )
}

function DisplayPanel() {
  return (
    <aside className="flex w-[206px] shrink-0 flex-col overflow-hidden border-l border-[#b5b7bc] bg-white">
      <PanelStrip closable={false} />
      <h2 className="h-[22px] shrink-0 border-b border-[#c3c5cb] bg-[#efefef] pl-[7px] leading-[21px] text-[#777]">显示设置</h2>
      <div className="flex h-7 shrink-0 items-end gap-1 border-b border-[#c3c5cb] bg-[#efefef] pl-[2px]" role="tablist">
        <button type="button" role="tab" aria-selected className="h-6 rounded-t-sm border border-b-0 border-[#c3c5cb] bg-white px-3 text-[#2f7fe0]">
          图元显示
        </button>
        <button type="button" role="tab" aria-selected={false} className="h-[23px] rounded-t-sm bg-[#dcdcdc] px-[13px] text-[#555]">
          楼层显示
        </button>
      </div>
      <div className="mt-[2px] ml-px h-[741px] min-h-0 overflow-hidden border-b border-l border-[#b5b7bc]">
        <table className="w-full table-fixed border-collapse text-black">
          <colgroup>
            <col className="w-[131px]" />
            <col className="w-[63px]" />
            <col />
          </colgroup>
          <thead>
            <tr className="h-[21px] bg-[#efefef] text-[#444]">
              <th className="border border-l-0 border-[#c3c5cb] p-0 font-normal">图层构件</th>
              <th className="border border-[#c3c5cb] p-0 font-normal">显示图元</th>
              <th className="overflow-hidden border-y border-[#c3c5cb] p-0 pl-2 text-left font-normal whitespace-nowrap">显示名称</th>
            </tr>
          </thead>
          <tbody>
            {LAYERS.map((layer, i) => (
              <tr key={i} className="h-[21px]">
                <td className="border-r border-b border-[#d6d6d6] p-0">
                  <LayerName layer={layer} last={LAYERS[i + 1]?.level === 1} />
                </td>
                <td className="border-r border-b border-[#d6d6d6] p-0">
                  <LayerCheck label={layer.name} state={layer.state} />
                </td>
                <td className="border-b border-[#d6d6d6] p-0" />
              </tr>
            ))}
          </tbody>
        </table>
      </div>
      <div className="flex h-10 shrink-0 items-center pl-[179px]">
        <button type="button" className="h-[25px] shrink-0 rounded-sm border border-[#b5b7bc] bg-white px-2 whitespace-nowrap text-black">
          恢复默认设置
        </button>
      </div>
    </aside>
  )
}

/* ---------- status bar ---------- */

function StatusBar() {
  const box = "flex h-6 items-center justify-center gap-1 border border-[#999] bg-[#cfcfd2]"
  return (
    <footer className="h-4 shrink-0 overflow-hidden bg-[#dddde0] text-[#333]">
      <div className="flex h-[30px] items-center whitespace-nowrap">
        <span className="w-[180px] pl-1.5">23782 Z = -1500</span>
        <span className="w-[83px]">层高： 7.45</span>
        <span className="w-[133px]">标高：  -1.5~5.95</span>
        <span className="w-[103px]">1(2)</span>
        <span className="w-[103px]">隐藏： 51</span>
        <div className="flex gap-1">
          <button type="button" aria-label="正交" className={box + " w-[25px]"}>
            <svg width="12" height="14" viewBox="0 0 12 14" fill="none" stroke="#333"><path d="M1 0v13h11" /></svg>
          </button>
          <button type="button" aria-label="框选" className="flex h-6 w-9 items-center justify-center gap-1 border border-[#2f8fe8] bg-white">
            <svg width="16" height="14" viewBox="0 0 16 14" fill="none">
              <path d="M3 2h11v11H3z" stroke="#3f84d6" />
              <path d="M0 0h5v5H0z" fill="#ef9a5a" />
            </svg>
            <Caret />
          </button>
          <button type="button" aria-label="交点" className={box + " w-[25px]"}>
            <svg width="16" height="16" viewBox="0 0 16 16" fill="none" stroke="#888"><path d="M1 0l7 8 7-8M8 8v8" /></svg>
          </button>
          <button type="button" aria-label="直线" className={box + " w-9"}>
            <svg width="12" height="12" viewBox="0 0 12 12" fill="none" stroke="#333"><path d="M10 0L2 10M0 8h4" /></svg>
            <Caret />
          </button>
          <button type="button" aria-label="点" className={box + " w-9"}>
            <svg width="12" height="12" viewBox="0 0 12 12" fill="none" stroke="#333"><path d="M6 0v12M1 4h10" /></svg>
            <Caret />
          </button>
          <button type="button" className={box + " w-[73px]"}>跨图层选择</button>
          <button type="button" className={box + " w-[61px]"}>折线选择</button>
        </div>
        <span className="pl-1.5">按鼠标左键指定第一个角点，或拾取构件图元</span>
        <span className="ml-auto pr-px">5</span>
      </div>
    </footer>
  )
}

/* ---------- floating windows ---------- */

function ImeBar() {
  return (
    <div className="absolute top-[541px] right-[22px] flex h-[23px] w-[196px] items-center justify-between border border-[#b9bcc6] bg-white pr-[5px] pl-[21px] text-[#1e73c8]">
      <svg width="28" height="28" viewBox="0 0 28 28" className="absolute top-[-5px] left-[-12px]">
        <path d="M2 6L22 1c2 0 3 1 3 2l3 19c0 1-1 2-2 2L8 27c-2 0-3-1-3-2L1 8z" fill="#f4511e" />
        <path d="M22 6.500c-6-1.500-14-.5-14 4.500 0 5 12 2.500 12 6 0 3-7 3.500-12 2" fill="none" stroke="#fff" strokeWidth="4" />
      </svg>
      <b className="text-[15px] leading-none">中</b>
      <svg width="13" height="14" viewBox="0 0 13 14" fill="none" stroke="currentColor">
        <circle cx="3" cy="4" r="1.800" strokeWidth="1.300" />
        <path d="M10 7.500c2 2 0 4-2 5" strokeWidth="2.200" />
      </svg>
      <svg width="17" height="17" viewBox="0 0 17 17" fill="none" stroke="currentColor" strokeWidth="1.500">
        <circle cx="8.500" cy="8.500" r="7" />
        <path d="M4.500 9c1 4.500 7 4.500 8 0M6 5v2.500M11 5v2.500" />
      </svg>
      <svg width="13" height="16" viewBox="0 0 13 16" fill="none" stroke="currentColor" strokeWidth="1.500">
        <rect x="4" y="1" width="5" height="9" rx="2.500" fill="currentColor" />
        <path d="M1 7c0 7 11 7 11 0M6.500 12v3M4 15h5" />
      </svg>
      <svg width="17" height="13" viewBox="0 0 17 13" fill="none" stroke="currentColor">
        <path d="M.7.7h15.600v11.600H.7z" strokeWidth="1.400" />
        <path d="M3 4h11M3 6.500h11" strokeDasharray="2 1" strokeWidth="1.500" />
        <path d="M4.500 9.500h8" strokeWidth="1.500" />
      </svg>
      <svg width="15" height="15" viewBox="0 0 15 15" fill="#b4c0d6">
        <circle cx="6" cy="4" r="3.500" />
        <path d="M0 14c0-8 12-8 12 0z" />
        <path d="M8.500 9.500h5.500v4.500H8.500z" fill="#fff" stroke="#b4c0d6" />
      </svg>
      <FaTshirt size={15} />
      <svg width="14" height="14" viewBox="0 0 14 14" fill="currentColor">
        <path d="M0 0h6v6H0zM0 7.500h6v6H0zM7.500 7.500h6v6h-6z" />
        <path d="M8.200.700h4.600v4.600H8.200z" fill="none" stroke="currentColor" strokeWidth="1.300" />
      </svg>
    </div>
  )
}

function TrayPopup() {
  return (
    <div className="absolute right-[178px] bottom-0 grid h-[107px] w-[162px] grid-cols-4 content-start justify-items-center gap-y-[22px] overflow-hidden border border-b-0 border-[#a9a9a9] bg-[#e3e3e3] pt-[10px] shadow-lg">
      <svg width="18" height="18" viewBox="0 0 18 18" fill="#bbb" stroke="#222">
        <path d="M4 14a3.500 3.500 0 010-6c1-4 7-5 9-1 4 0 4 7 0 7z" />
        <path d="M1 4l15 12" strokeWidth="1.500" />
      </svg>
      <svg width="18" height="18" viewBox="0 0 18 18" fill="#e02f3c">
        <circle cx="9" cy="9.500" r="3" /><circle cx="3.500" cy="11.500" r="2" /><circle cx="7" cy="4.500" r="2" />
        <circle cx="13" cy="5" r="2" /><circle cx="14.500" cy="10.500" r="2" /><circle cx="8" cy="14.500" r="1.500" />
      </svg>
      <svg width="18" height="18" viewBox="0 0 18 18" fill="#fff" stroke="#222">
        <path d="M8.500 1l7 2.500v5c0 4-3 6-7 8-4-2-7-4-7-8v-5zM8.500 1v15M1.500 8.500h14" strokeWidth="1.200" />
        <path d="M13 9l4.500 8h-9z" fill="#fbc02d" stroke="none" />
        <path d="M13 11.500v2.500M13 15v1" />
      </svg>
      <svg width="18" height="18" viewBox="0 0 18 18" fill="none" stroke="#fff" strokeWidth="1.500">
        <rect x="1" y="1" width="16" height="16" rx="2.500" fill="#dd001b" stroke="none" />
        <path d="M12 3c-2-.5-3 0-2.500 2l1 4.500a2 2 0 11-2.500-2c2-1 6-.5 5.500 3-1 5-9 5-9.500 0C3.700 8 5 6 7 5" />
      </svg>
      <svg width="18" height="18" viewBox="0 0 18 18">
        <circle cx="9" cy="9" r="8" fill="#3296fa" />
        <path d="M4 4l9 4c1 1 0 2-1 3l-2 4-1-3C6 11 4 8 4 4z" fill="#fff" />
      </svg>
      <svg width="18" height="18" viewBox="0 0 18 18" fill="none" strokeWidth="2.500">
        <path d="M2 15c3-1 5-4 6-10" stroke="#46a049" />
        <path d="M9 9l5 6" stroke="#2f7fd6" />
        <path d="M3 13L7 4" stroke="#f4b13e" />
        <circle cx="11.500" cy="6" r="4" stroke="#ee6c3a" />
      </svg>
      <svg width="18" height="18" viewBox="0 0 18 18">
        <path d="M7 2c4 0 6 2 6 5s-3 5-6 5l-3 2v-2.500C2 10.500 1 9 1 7c0-3 2.500-5 6-5z" fill="#2dc365" />
        <ellipse cx="12.500" cy="11.500" rx="5" ry="4.200" fill="#f4f4f4" />
        <path d="M4.500 5.500h1V7h-1zM8.500 5.500h1V7h-1zM10.500 10h1v1h-1zM13.500 10h1v1h-1z" fill="#267a45" />
      </svg>
      <svg width="18" height="18" viewBox="0 0 18 18" fill="none" stroke="#2191ee" strokeWidth="3.500">
        <path d="M15 4C9 1 3 4 3 9.500c0 6 8 7 11 3 1-1.500 1-3 1-4H9" />
        <path d="M15 2l2 2" strokeWidth="2" />
      </svg>
      <div className="grid h-4 w-[15px] place-items-center bg-[#222] text-[6px] leading-none font-bold text-white">EPIC</div>
      <svg width="18" height="18" viewBox="0 0 18 18" fill="#2484ff">
        <path d="M9 1l7 3.500L9 8 2 4.500zM2 8l7 3.500L16 8v2.500L9 14l-7-3.500zM2 12l7 3.500 7-3.500v2l-7 3.500-7-3.500z" />
      </svg>
    </div>
  )
}

function Arrows() {
  return (
    <svg className="pointer-events-none absolute inset-0 h-full w-full" fill="#ff2010" aria-hidden>
      <path d="M204 421L202 437 206 435 321 741 323 740 213 433 218 432z" />
      <path d="M956 784L927 789 936 795 783 968 784 970 945 803 953 808z" />
    </svg>
  )
}

export default function App() {
  return (
    <div className="relative flex h-screen flex-col overflow-hidden bg-white font-['Noto_Sans','Noto_Sans_CJK_SC',sans-serif] text-xs text-black">
      <TitleBar />
      <MenuBar />
      <Ribbon />
      <SelectorBar />
      <main className="flex min-h-0 flex-1">
        <ModulePanel />
        <div className="ml-1 flex w-[355px] shrink-0 flex-col gap-1">
          <ComponentPanel />
          <PropertyPanel />
        </div>
        <SideHandle />
        <div className="flex min-w-0 flex-1 flex-col">
          <div className="relative min-h-0 flex-1 overflow-hidden bg-black font-['Noto_Sans_CJK_SC',sans-serif]">
            <ModelDrawing />
            <ViewTools />
          </div>
          <div className="flex h-[5px] shrink-0 justify-center">
            <button type="button" aria-label="折叠" className="h-1 w-[100px] bg-[#5f6a77]" />
          </div>
          <RebarEditor />
        </div>
        <SideHandle flip />
        <DisplayPanel />
      </main>
      <StatusBar />
      <ImeBar />
      <TrayPopup />
      <Arrows />
    </div>
  )
}
